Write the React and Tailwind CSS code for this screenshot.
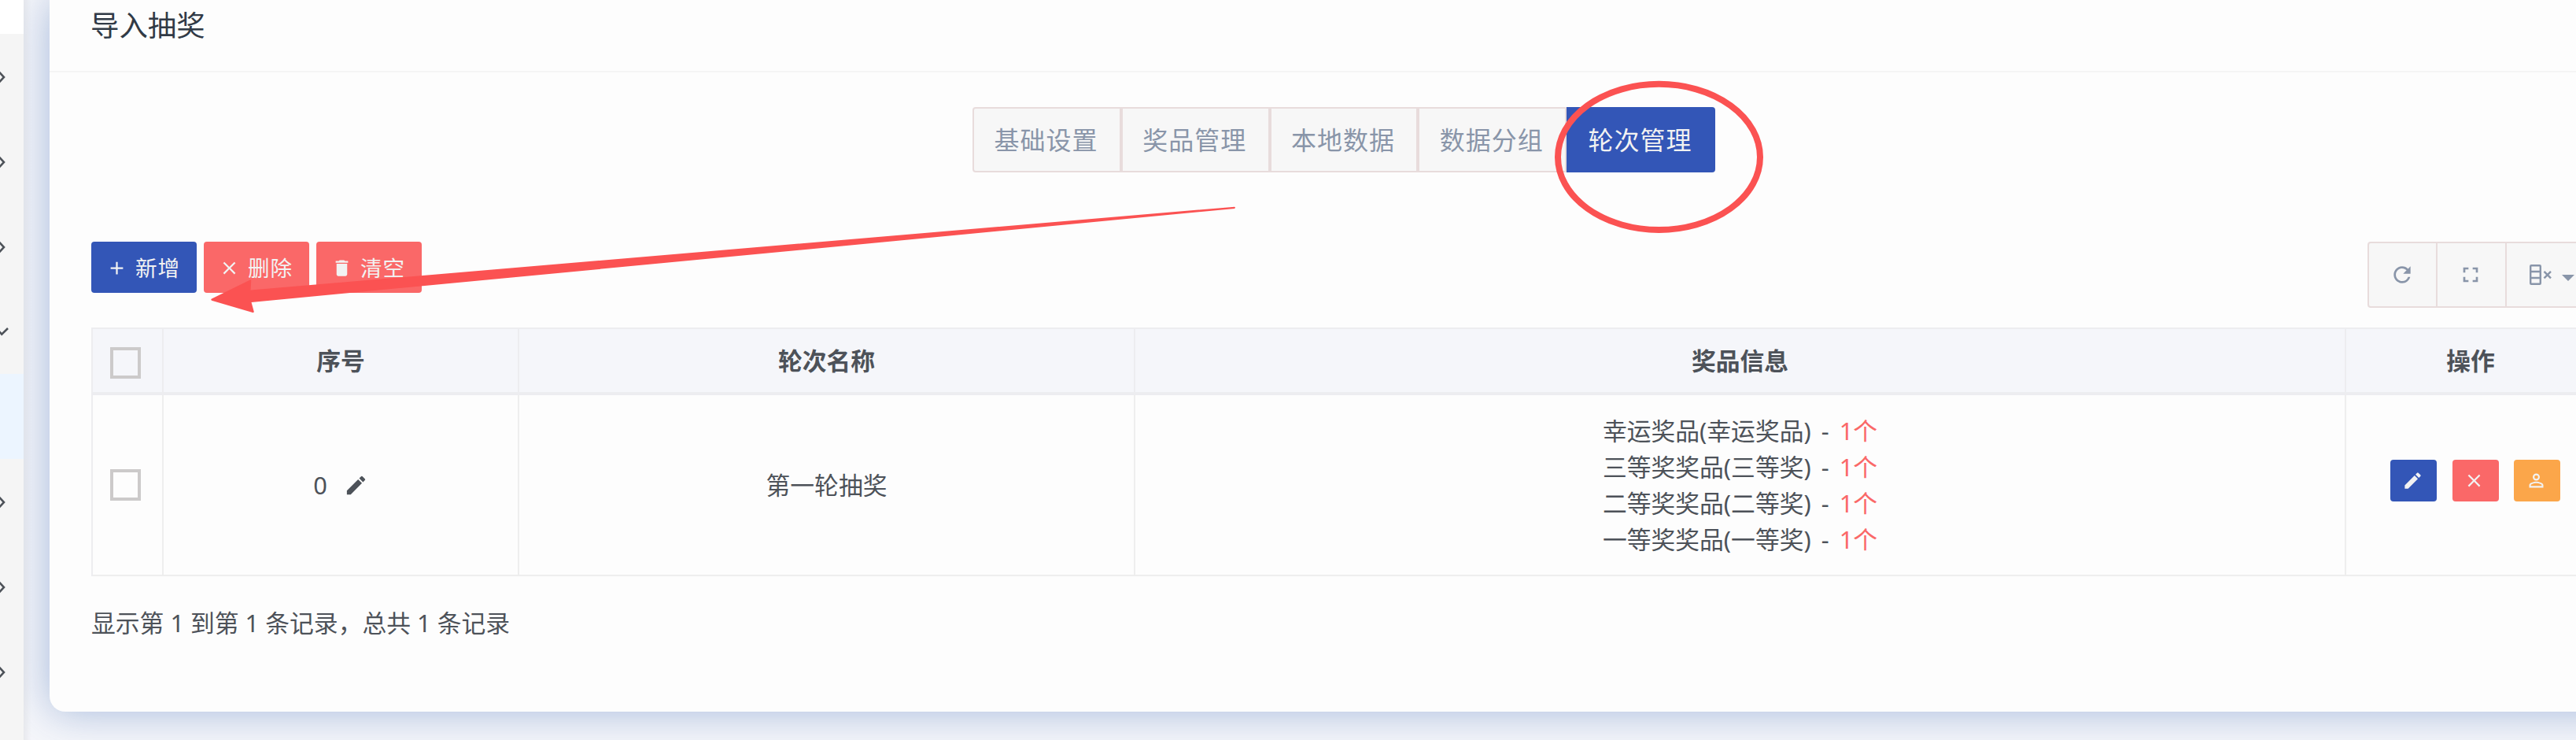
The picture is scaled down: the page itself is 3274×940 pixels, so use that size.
import React from 'react'
import { MdAdd, MdClose, MdDelete, MdEdit, MdRefresh, MdFullscreen, MdPersonOutline } from 'react-icons/md'

const TABS = ['基础设置', '奖品管理', '本地数据', '数据分组', '轮次管理']

const PRIZES = [
  { name: '幸运奖品(幸运奖品)', count: 1 },
  { name: '三等奖奖品(三等奖)', count: 1 },
  { name: '二等奖奖品(二等奖)', count: 1 },
  { name: '一等奖奖品(一等奖)', count: 1 }
]

const MENU = ['closed', 'closed', 'closed', 'open', 'active', 'closed', 'closed', 'closed']

const Chevron = ({ open }) => (
  <svg width="12" height="16" viewBox="0 0 12 16" fill="none" stroke="#4d5259" strokeWidth="2.6" className="mt-[2px] block">
    {open ? <path d="M-2 6 L2.2 10.6 L10 3" /> : <path d="M-1 1.5 L5 8 L-1 14.5" />}
  </svg>
)

const Checkbox = () => (
  <span className="mr-[5px] block h-10 w-[39px] border-4 border-[#cccaca]" />
)

const ToolButton = ({ icon: Icon, label, className }) => (
  <button className={`flex h-[65px] w-[134px] items-center rounded-[4px] pl-[19px] pt-[2px] text-[27.6px] leading-none tracking-[1px] text-[#f2f2f2] ${className}`}>
    <Icon size={27} className="shrink-0" />
    <span className="ml-[10px] whitespace-nowrap">{label}</span>
  </button>
)

const ActionButton = ({ icon: Icon, className }) => (
  <button className={`flex h-[53px] w-[59px] items-center justify-center rounded-[4px] pr-[3px] text-[#f2f2f2] ${className}`}>
    <Icon size={27} />
  </button>
)

const ColumnsIcon = () => (
  <svg width="28" height="26" viewBox="0 0 28 26" fill="none" stroke="#8995a9" strokeWidth="2.4" className="block">
    <rect x="1.2" y="1.2" width="12.6" height="23.6" rx="1" />
    <path d="M1 9h13M1 17h13M18.500 8.800l8.500 8.500M27 8.800l-8.500 8.500" />
  </svg>
)

function Sidebar() {
  return (
    <aside className="relative z-10 flex w-[30px] shrink-0 flex-col overflow-hidden bg-[#f5f5f5]">
      <div className="h-[43px] shrink-0 bg-white" />
      {MENU.map((state, i) => (
        <div
          key={i}
          className={`flex h-[108px] shrink-0 items-center ${state === 'active' ? 'bg-[#ecf5ff]' : ''}`}
        >
          {state !== 'active' && <Chevron open={state === 'open'} />}
        </div>
      ))}
    </aside>
  )
}

// Hand-drawn marks laid over the page
function Annotations() {
  return (
    <svg className="pointer-events-none absolute left-0 top-0 z-20" width="3274" height="940" viewBox="0 0 3274 940">
      <ellipse cx="2108.5" cy="199.4" rx="128.5" ry="92.6" fill="none" stroke="#fb5252" strokeWidth="8" />
      <path
        d="M269 379.5 L318 355.6 Q319.500 355.500 319.200 357 L318.500 368.500 L1569 262.700 Q1571 263.500 1569 265 L319.500 384 L322.800 396 Q322.500 397.500 321 397 L269 381.800 Q267.500 380.500 269 379.500 Z"
        fill="#fb5252"
      />
    </svg>
  )
}

export default function App() {
  return (
    <div className="relative flex h-[940px] w-[3274px] overflow-hidden bg-[#f5f6fa] font-['Noto_Sans','Noto_Sans_CJK_SC',sans-serif] text-[30.8px] leading-[46px] text-[#4d5259]">
      <Sidebar />

      <main className="relative flex-1 overflow-hidden pl-[33px]">
        <section className="h-[904px] w-[3290px] rounded-bl-[20px] bg-[#fdfdfd] shadow-[0_0_54px_rgba(45,92,172,0.4)]">
          {/* Header */}
          <header className="flex h-[92px] items-start border-b-2 border-[#f5f5f5] pl-[52px] pt-[9px]">
            <h1 className="text-[36.4px] leading-[46px] text-[#313a46]">导入抽奖</h1>
          </header>

          <div className="px-[53px] pt-11">
            {/* Tabs */}
            <nav className="mx-auto flex h-[83px] w-[944px]">
              {TABS.map((tab, i) => (
                <button
                  key={tab}
                  className={`flex-1 whitespace-nowrap border-2 pr-[2px] text-[32px] tracking-[1px] first:rounded-l-[4px] last:rounded-r-[4px] ${
                    i === TABS.length - 1
                      ? 'border-[#3356b7] bg-[#3356b7] text-[#f2f2f2]'
                      : 'border-[#e8dcdc] bg-[#f7f7f7] text-[#8995a9]'
                  }`}
                >
                  {tab}
                </button>
              ))}
            </nav>

            {/* Toolbar */}
            <div className="mt-[88px] flex h-[109px] items-start justify-between">
              <div className="flex gap-[9px]">
                <ToolButton icon={MdAdd} label="新增" className="bg-[#3356b7]" />
                <ToolButton icon={MdClose} label="删除" className="bg-[#fa6868]" />
                <ToolButton icon={MdDelete} label="清空" className="bg-[#fa6868]" />
              </div>
              <div className="flex h-[84px] w-[291px] rounded-[4px] border-2 border-[#e8dcdc] bg-[#f7f7f7] text-[#8995a9]">
                <button className="flex w-[87px] items-center justify-center border-r-2 border-[#e8dcdc] pr-[2px]">
                  <MdRefresh size={32} />
                </button>
                <button className="flex w-[88px] items-center justify-center border-r-2 border-[#e8dcdc] pr-[2px]">
                  <MdFullscreen size={32} />
                </button>
                <button className="flex items-center pl-[29px]">
                  <ColumnsIcon />
                  <span className="ml-[13px] mt-[8px] border-x-8 border-t-8 border-x-transparent border-t-[#8995a9]" />
                </button>
              </div>
            </div>

            {/* Rounds table */}
            <table className="w-[3184px] table-fixed border-separate border-spacing-0 border-l-2 border-t-2 border-[#ededf0] text-center">
              <colgroup>
                <col className="w-[90px]" />
                <col className="w-[452px]" />
                <col className="w-[783px]" />
                <col className="w-[1539px]" />
                <col />
              </colgroup>
              <thead>
                <tr className="h-[84px] bg-[#f5f6fa] [&>th]:border-b-4 [&>th]:border-r-2 [&>th]:border-[#ededf0] [&>th]:p-0">
                  <th><div className="flex justify-center pt-[5px]"><Checkbox /></div></th>
                  <th>序号</th>
                  <th>轮次名称</th>
                  <th>奖品信息</th>
                  <th>操作</th>
                </tr>
              </thead>
              <tbody>
                <tr className="h-[230px] [&>td]:border-b-2 [&>td]:border-r-2 [&>td]:border-[#eeeeee] [&>td]:p-0">
                  <td><div className="flex justify-center"><Checkbox /></div></td>
                  <td>
                    <div className="flex items-center justify-center">
                      <span>0</span>
                      <MdEdit size={31} className="ml-[21px]" />
                    </div>
                  </td>
                  <td>第一轮抽奖</td>
                  <td>
                    {PRIZES.map(prize => (
                      <div key={prize.name}>
                        {prize.name} <span className="mx-[5px]">-</span> <span className="text-[#fa6868]">{prize.count}个</span>
                      </div>
                    ))}
                  </td>
                  <td>
                    <div className="-mt-[12px] flex justify-center gap-[19.5px] pl-[12px]">
                      <ActionButton icon={MdEdit} className="bg-[#3356b7]" />
                      <ActionButton icon={MdClose} className="bg-[#fa6868]" />
                      <ActionButton icon={MdPersonOutline} className="bg-[#fba64a]" />
                    </div>
                  </td>
                </tr>
              </tbody>
            </table>

            <p className="mt-[36px]">显示第 1 到第 1 条记录，总共 1 条记录</p>
          </div>
        </section>
        {/* Soft edge cast by the sidebar */}
        <div className="absolute left-0 top-0 h-full w-[10px] bg-gradient-to-r from-black/5 to-transparent" />
      </main>

      <Annotations />
    </div>
  )
}
